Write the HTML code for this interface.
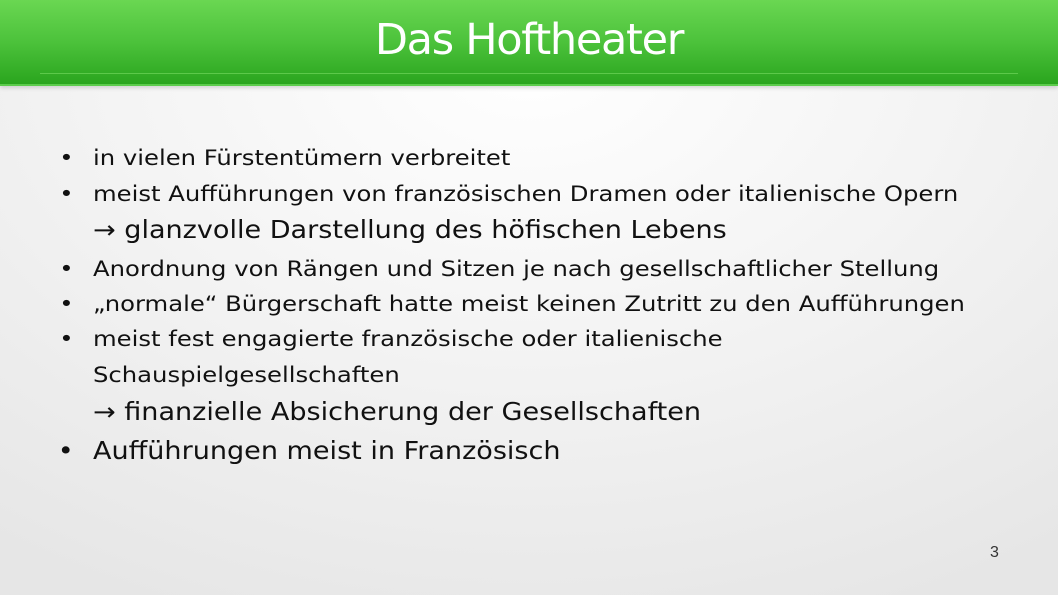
<!DOCTYPE html>
<html><head><meta charset="utf-8"><style>
html,body{margin:0;padding:0}
body{width:1058px;height:595px;overflow:hidden;position:relative;
background:radial-gradient(ellipse 900px 600px at 50% 10%,#ffffff 0%,#f3f3f3 50%,#e6e6e6 100%);
font-family:"DejaVu Sans","Liberation Sans",sans-serif;color:#111}
.hdr{position:absolute;left:0;top:0;width:1058px;height:84px;
background:linear-gradient(180deg,#6ad752 0%,#4cc23b 50%,#2aa51e 100%);
border-bottom:2px solid #5ccc4c;box-shadow:0 2px 4px rgba(0,0,0,.15)}
.hdr:after{content:"";position:absolute;left:40px;right:40px;top:73px;height:1px;background:rgba(120,220,100,.6)}
.t{position:absolute;left:0;width:1058px;top:13px;text-align:center;color:#fff;font-size:43px;line-height:54px;font-family:"DejaVu Sans",sans-serif;letter-spacing:-1.3px}
.l{position:absolute;left:93px;white-space:nowrap;font-size:21.6px;line-height:26px;transform-origin:0 50%;transform:scaleX(1.125)}
.b:before{content:"•";position:absolute;left:-30px;}
.big{font-size:24.6px;transform:scaleX(1.1)}
.big.b:before{left:-32px}
.pn{position:absolute;left:990px;top:544px;font-size:16px;font-family:"Liberation Sans",sans-serif;color:#333}
</style></head><body>
<div class="hdr"><div class="t">Das Hoftheater</div></div>
<div class="l b" style="top:146px">in vielen Fürstentümern verbreitet</div>
<div class="l b" style="top:182px">meist Aufführungen von französischen Dramen oder italienische Opern</div>
<div class="l big" style="top:217px">→ glanzvolle Darstellung des höfischen Lebens</div>
<div class="l b" style="top:257px">Anordnung von Rängen und Sitzen je nach gesellschaftlicher Stellung</div>
<div class="l b" style="top:292px">„normale“ Bürgerschaft hatte meist keinen Zutritt zu den Aufführungen</div>
<div class="l b" style="top:327px">meist fest engagierte französische oder italienische</div>
<div class="l" style="top:363px">Schauspielgesellschaften</div>
<div class="l big" style="top:399px">→ finanzielle Absicherung der Gesellschaften</div>
<div class="l b big" style="top:438px">Aufführungen meist in Französisch</div>
<div class="pn">3</div>
</body></html>
